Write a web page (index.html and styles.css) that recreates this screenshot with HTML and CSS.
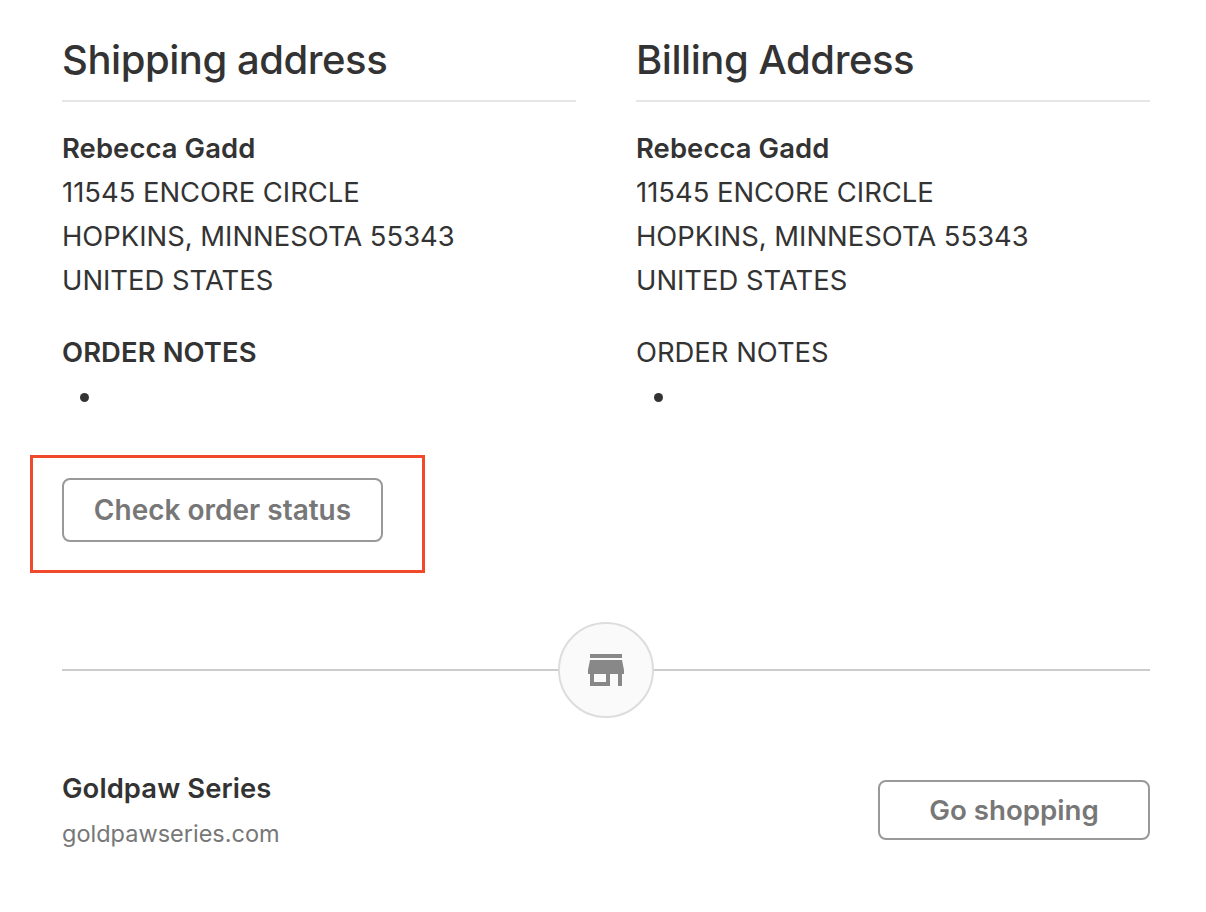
FILE: index.html
```html
<!DOCTYPE html>
<html lang="en">
<head>
<meta charset="utf-8">
<title>Order</title>
<link rel="stylesheet" href="styles.css">
</head>
<body>
<main class="page">
  <div class="columns">
    <section class="col">
      <h2 class="heading">Shipping address</h2>
      <div class="address">
        <div class="name">Rebecca Gadd</div>
        <div>11545 ENCORE CIRCLE</div>
        <div>HOPKINS, MINNESOTA 55343</div>
        <div>UNITED STATES</div>
      </div>
      <div class="notes notes-bold">ORDER NOTES</div>
      <ul class="list"><li></li></ul>
    </section>
    <section class="col">
      <h2 class="heading">Billing Address</h2>
      <div class="address">
        <div class="name">Rebecca Gadd</div>
        <div>11545 ENCORE CIRCLE</div>
        <div>HOPKINS, MINNESOTA 55343</div>
        <div>UNITED STATES</div>
      </div>
      <div class="notes">ORDER NOTES</div>
      <ul class="list"><li></li></ul>
    </section>
  </div>
  <div class="action">
    <a class="btn btn-status">Check order status</a>
    <span class="highlight"></span>
  </div>
  <div class="divider">
    <span class="rule"></span>
    <span class="badge">
      <svg width="48" height="48" viewBox="0 0 24 24" aria-hidden="true"><path fill="#888" d="M20 4H4v2h16V4zm1 10v-2l-1-5H4l-1 5v2h1v6h10v-6h4v6h2v-6h1zm-9 4H6v-4h6v4z"/></svg>
    </span>
    <span class="rule"></span>
  </div>
  <footer class="footer">
    <div>
      <div class="shop">Goldpaw Series</div>
      <div class="url">goldpawseries.com</div>
    </div>
    <a class="btn btn-shop">Go shopping</a>
  </footer>
</main>
</body>
</html>
```
FILE: styles.css
```css
* { box-sizing: border-box; }
html, body { margin: 0; background: #fff; }
body {
  font-family: Inter, "Liberation Sans", sans-serif;
  color: #333;
  font-size: 27.4px;
  line-height: 44px;
}
.page { width: 1206px; height: 912px; padding: 0 56px 0 62px; overflow: hidden; }
.columns { display: flex; gap: 60px; }
.col { width: 514px; }
.heading {
  margin: 0;
  height: 102px;
  padding-top: 37px;
  border-bottom: 2px solid #e6e6e6;
  font-size: 40px;
  line-height: 46px;
  font-weight: 500;
  letter-spacing: -0.45px;
}
.address { margin-top: 24px; }
.name, .notes-bold, .shop { font-weight: 600; letter-spacing: 0.1px; }
.notes { margin-top: 28px; }
.list { margin: 1px 0 0; padding: 0 0 0 43px; height: 44px; }
.action { position: relative; margin-top: 59px; width: max-content; }
.btn {
  display: flex;
  align-items: center;
  justify-content: center;
  border: 2px solid #999;
  border-radius: 8px;
  color: #777;
  font-size: 28px;
  font-weight: 600;
}
.btn-status { width: 321px; height: 64px; }
.highlight {
  position: absolute;
  left: -32px;
  top: -23px;
  width: 395px;
  height: 118px;
  border: 3px solid #f0492b;
}
.divider { display: flex; align-items: center; margin-top: 80px; }
.rule { flex: 1; height: 2px; background: #ccc; }
.badge {
  width: 96px;
  height: 96px;
  border-radius: 50%;
  border: 2px solid #ddd;
  background: #fafafa;
  display: flex;
  align-items: center;
  justify-content: center;
}
.footer { display: flex; justify-content: space-between; align-items: flex-start; margin-top: 48px; }
.url { color: #777; font-size: 23.5px; line-height: 46px; margin-top: 1px; }
.btn-shop { width: 272px; height: 60px; margin-top: 14px; font-size: 27.7px; }
```
